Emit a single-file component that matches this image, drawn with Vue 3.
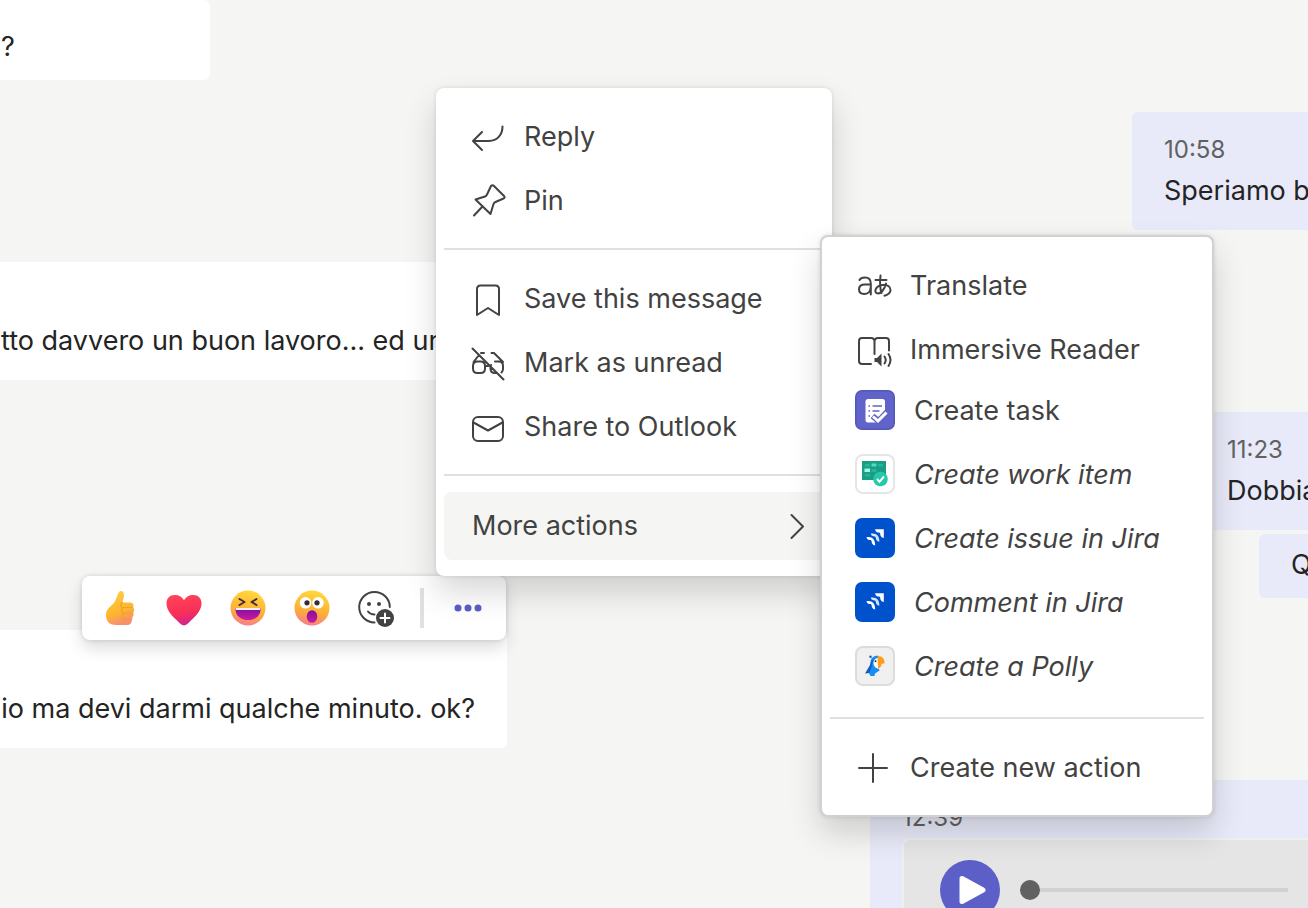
<script setup>
const jira = 'jira'
const quickActions = [
  { icon: 'reply', label: 'Reply' },
  { icon: 'pin', label: 'Pin' },
]
const messageActions = [
  { icon: 'save', label: 'Save this message' },
  { icon: 'unread', label: 'Mark as unread' },
  { icon: 'mail', label: 'Share to Outlook' },
]
const readingActions = [
  { icon: 'translate', label: 'Translate' },
  { icon: 'reader', label: 'Immersive Reader' },
]
const appActions = [
  { icon: 'task', label: 'Create task', plain: true },
  { icon: 'board', label: 'Create work item' },
  { icon: jira, label: 'Create issue in Jira' },
  { icon: jira, label: 'Comment in Jira' },
  { icon: 'polly', label: 'Create a Polly' },
]
</script>

<template>
  <main class="chat">
    <section class="column received">
      <article class="bubble first"><p>?</p></article>
      <article class="bubble second"><p>tto davvero un buon lavoro... ed un</p></article>
      <article class="bubble third">
        <p>io ma devi darmi qualche minuto. ok?</p>
        <div class="reactions" role="toolbar" aria-label="Reactions">
          <button type="button" aria-label="Like">
            <svg viewBox="0 0 36 36" width="36" height="36">
              <defs>
                <linearGradient id="thumb" x1="0" y1="0" x2="0.3" y2="1">
                  <stop offset="0" stop-color="#ffd04a" /><stop offset="0.7" stop-color="#fdb52c" /><stop offset="1" stop-color="#f98f72" />
                </linearGradient>
              </defs>
              <path d="M17 2c2-2 5-.5 5 2.500 0 3-1 5.500-1.500 8h7.500c3 0 4.500 3 3 5 1.500 1.500 1.500 4 0 5 1 2 .5 4-1 5 .5 3-.5 7-4 7.500H14C7 35 4 31 4 25c0-6 4-8 7-11 3-3 4-9 6-12z" fill="url(#thumb)" />
              <path d="M20.500 12.500c-3 2-2 5 1 5h9M21 18c-2.500 1-2 5 1 5h9M22 23.500c-2.500 1-2 5 1 5h7M23 29c-2 1-2 4 0 5" fill="none" stroke="#f0a02a" stroke-width="1.200" stroke-linecap="round" />
            </svg>
          </button>
          <button type="button" aria-label="Heart">
            <svg viewBox="0 0 36 36" width="36" height="36">
              <defs>
                <linearGradient id="heart" x1="0.3" y1="0" x2="0.55" y2="1">
                  <stop offset="0" stop-color="#ff4458" /><stop offset="0.6" stop-color="#f92f56" /><stop offset="1" stop-color="#cc2496" />
                </linearGradient>
              </defs>
              <path d="M18 35.500c-2 0-5-3-8-6C4 24 .5 19 .5 13.500.5 8 4 5 8.500 5c4.500 0 8 2 9.500 5.500C19.500 7 23 5 27.500 5 32 5 35.500 8 35.500 13.500c0 5.500-4 11-9.500 16-3 3-6 6-8 6z" fill="url(#heart)" />
            </svg>
          </button>
          <button type="button" aria-label="Laugh">
            <svg viewBox="0 0 36 36" width="36" height="36">
              <defs>
                <linearGradient id="face" x1="0.6" y1="0" x2="0.4" y2="1">
                  <stop offset="0" stop-color="#ffd83c" /><stop offset="0.6" stop-color="#fdaf35" /><stop offset="1" stop-color="#f77f8c" />
                </linearGradient>
                <linearGradient id="mouth" x1="0" y1="0" x2="0" y2="1">
                  <stop offset="0" stop-color="#7d10a5" /><stop offset="1" stop-color="#cc1a9a" />
                </linearGradient>
              </defs>
              <circle cx="18" cy="18" r="17.500" fill="url(#face)" />
              <path d="M9.500 9l5 3-5 3M26.500 9l-5 3 5 3" fill="none" stroke="#4b2b35" stroke-width="2" stroke-linecap="round" stroke-linejoin="round" />
              <path d="M5.500 18h25c.5 7-5 12-12.500 12S5 25 5.500 18z" fill="url(#mouth)" />
              <path d="M5.500 18h25l-.5 2H6z" fill="#f5edf8" />
            </svg>
          </button>
          <button type="button" aria-label="Surprised">
            <svg viewBox="0 0 36 36" width="36" height="36">
              <circle cx="18" cy="18" r="17.500" fill="url(#face)" />
              <circle cx="11.500" cy="12.800" r="5.800" fill="#fff" /><circle cx="24" cy="12.800" r="5.800" fill="#fff" />
              <circle cx="13" cy="12.800" r="2.600" fill="#382a34" /><circle cx="23" cy="12.800" r="2.600" fill="#382a34" />
              <ellipse cx="18" cy="26.500" rx="5.300" ry="6.300" fill="url(#mouth)" />
            </svg>
          </button>
          <button type="button" aria-label="Add reaction">
            <svg viewBox="0 0 36 36" width="36" height="36" class="line">
              <path d="M31.800 17A15.300 15.300 0 1 0 16.500 32.500M10 21.500c1.500 2 3.500 3 6.500 3" />
              <circle cx="11" cy="14" r="2" class="solid" /><circle cx="21" cy="14" r="2" class="solid" />
              <circle cx="27" cy="28" r="9" class="solid" />
              <path d="M27 23.500v9M22.500 28h9" class="knockout" />
            </svg>
          </button>
          <span class="bar"></span>
          <button type="button" aria-label="More options">
            <svg viewBox="0 0 36 36" width="36" height="36" fill="#5b5fc7">
              <circle cx="8" cy="18" r="3.500" /><circle cx="18" cy="18" r="3.500" /><circle cx="28" cy="18" r="3.500" />
            </svg>
          </button>
        </div>
      </article>
    </section>

    <section class="column sent">
      <article class="bubble one"><time>10:58</time><p>Speriamo b</p></article>
      <article class="bubble two"><time>11:23</time><p>Dobbia</p></article>
      <article class="bubble three"><p>Q</p></article>
      <article class="bubble four">
        <time>12:39</time>
        <div class="player">
          <button type="button" class="play" aria-label="Play">
            <svg viewBox="0 0 60 60" width="60" height="60">
              <path d="M22 18.500v23l21-11.500z" fill="#fff" stroke="#fff" stroke-width="5" stroke-linejoin="round" />
            </svg>
          </button>
          <input type="range" min="0" max="100" value="0" aria-label="Position" />
        </div>
      </article>
    </section>

    <nav class="menu primary" aria-label="Message actions">
      <button v-for="a in quickActions" :key="a.label" type="button" class="item">
        <svg v-if="a.icon === 'reply'" class="line" viewBox="0 0 32 32" width="32" height="32">
          <path d="M10 12L1 21l9 9M1 21h16c8 0 13.500-6 13.500-14.500" />
        </svg>
        <svg v-else class="line" viewBox="0 0 32 32" width="32" height="32">
          <path d="M19 2q1.500-1.500 3 0l10 10q1.500 1.500-.5 2.500l-8 3.500q-1.500.5-2 2l-3 10L3.500 15.500l9.500-3q1.500-.5 2-2zM10.500 22.500L2 31.500" />
        </svg>
        <span>{{ a.label }}</span>
      </button>
      <hr />
      <button v-for="a in messageActions" :key="a.label" type="button" class="item">
        <svg v-if="a.icon === 'save'" class="line" viewBox="0 0 32 32" width="32" height="32">
          <path d="M5 33V7q0-3.500 3.500-3.500h15q3.500 0 3.500 3.500v26l-11-7z" />
        </svg>
        <svg v-else-if="a.icon === 'unread'" class="line" viewBox="0 0 32 32" width="32" height="32">
          <path d="M.5 2.500l31 31M9 7h3M7 9L1.500 16M19.500 7h2.500L31 16M5.500 15.500h3q4.500 0 4.500 4.500v2.500q0 4.500-4.500 4.500h-3Q1 27 1 22.500V20q0-4.500 4.500-4.500M13 20h3.500M23 15.500h4q4 0 4 4.500v3q0 2-1.500 3.500M19 19q-.5 1-.5 2v1.500q0 4.500 4.500 4.500h2" />
        </svg>
        <svg v-else class="line" viewBox="0 0 32 32" width="32" height="32">
          <rect x="1" y="7" width="30" height="24" rx="5" /><path d="M1.500 12.500L16 20.500l14.500-8" />
        </svg>
        <span>{{ a.label }}</span>
      </button>
      <hr />
      <button type="button" class="item more" aria-haspopup="true" aria-expanded="true">
        <span>More actions</span>
        <svg class="line chevron" viewBox="0 0 14 26" width="14" height="26"><path d="M1.500 3L13 14.500 1.500 26" /></svg>
      </button>
    </nav>

    <nav class="menu secondary" aria-label="More actions">
      <button v-for="a in readingActions" :key="a.label" type="button" class="item">
        <svg v-if="a.icon === 'translate'" class="line" viewBox="0 0 36 36" width="36" height="36">
          <path d="M3.500 13c1-2 3-2.500 5.500-2.500 4 0 5.800 2 5.800 6V27.500M14.500 17.500H9c-4 0-6 1.500-6 4.800 0 3 2 4.700 5 4.700 4 0 6.500-2.500 6.500-6" />
          <path d="M19.500 13h11M24.500 8.500c-.8 7-.5 13 1 17.500M30 16.500C28.500 22.500 25 26.500 22 26.500c-4.500 0-3.500-7.500 4.500-8.500 5-.5 8 1.500 8 5 0 3-2.500 4.800-6 5.800" />
        </svg>
        <svg v-else class="line" viewBox="0 0 36 36" width="36" height="36">
          <path d="M15 33H6q-3 0-3-3V10q0-3 3-3h9q3.500 0 3.500 3.500V23M18.500 10.500Q18.500 7 22 7h8q3 0 3 3v9.500" />
          <path d="M18.500 27h2.500l4.500-4.500v13L21 31h-2.500z" class="solid" />
          <path d="M28.500 25.500q2.500 3.500 0 7M32.500 23q4 6 0 12" />
        </svg>
        <span>{{ a.label }}</span>
      </button>
      <div class="apps">
        <button v-for="a in appActions" :key="a.label" type="button" class="item app" :class="{ plain: a.plain }">
          <svg v-if="a.icon === 'task'" viewBox="0 0 40 40" width="40" height="40">
            <rect width="40" height="40" rx="7" fill="#5358b5" /><rect x="1.500" y="1.500" width="37" height="37" rx="5" fill="#5f63ca" />
            <path d="M13 9h14.500a2.500 2.500 0 0 1 2.500 2.500V24l-8 8.500h-9a2.500 2.500 0 0 1-2.500-2.500V11.500A2.500 2.500 0 0 1 13 9z" fill="#fff" />
            <path d="M13.500 16h1.500M17.500 16H27M13.500 21h1.500M17.500 21h7M13.500 26h1.500" fill="none" stroke="#6065c9" stroke-width="1.500" />
            <path d="M17.500 26l6 5L33 21" fill="none" stroke="#5f63ca" stroke-width="6" />
            <path d="M18 26.500l5 4.500L31.500 22.500" fill="none" stroke="#fff" stroke-width="3" />
          </svg>
          <svg v-else-if="a.icon === 'board'" viewBox="0 0 40 40" width="40" height="40">
            <rect x="1" y="1" width="38" height="38" rx="7" fill="#fff" stroke="#e6e6e6" stroke-width="2" />
            <path d="M7 7h24v19H7z" fill="#1b9c85" />
            <path d="M10 10h5v2.500h-5zM23 10h5v2.500h-5zM16.500 15h5v3h-5zM10 20h5v2.500h-5z" fill="#20b898" />
            <path d="M16.500 9.500h5v3h-5z" fill="#55dcc0" /><path d="M9.500 14.500H15v3.500H9.500z" fill="#a4f5e2" />
            <circle cx="25.500" cy="25" r="7.300" fill="#25c9a9" /><path d="M22 25l2.500 2.800L29 22.500" fill="none" stroke="#fff" stroke-width="2" />
          </svg>
          <svg v-else-if="a.icon === 'jira'" viewBox="0 0 40 40" width="40" height="40">
            <rect width="40" height="40" rx="7" fill="#0052cc" />
            <path d="M20 11.200h8.800V20c-2.600-.6-3.600-2-3.600-4.600l-.8-.8C21.800 14.600 20.400 13.600 20 11.200z" fill="#fff" />
            <path d="M15.800 15.400c3 0 8.600-.5 8.600 8.400-2.600-.6-3.600-2-3.600-4.600l-.8-.8c-2.600 0-3.800-.8-4.200-3z" fill="#d6e4fa" />
            <path d="M11.500 19c3 0 8.700-.5 8.700 8.500-2.600-.6-3.600-2-3.600-4.600l-.8-.8c-2.600 0-3.900-.8-4.300-3.100z" fill="#fff" />
          </svg>
          <svg v-else viewBox="0 0 40 40" width="40" height="40">
            <rect x="1" y="1" width="38" height="38" rx="7" fill="#f0f0f0" stroke="#dcdcdc" stroke-width="2" />
            <path d="M24 10c-5-.8-8.500 2-8.500 7L14 27l1.500 3h4l.5-2.500 4.500-3-3-9z" fill="#148df5" />
            <path d="M15.500 10.500l1.500 3-2 5.500-5 8.500 4.500-.5 2-6 1.500-6.500z" fill="#185bbd" />
            <circle cx="15.500" cy="10.800" r="1.200" fill="#185bbd" />
            <path d="M24 12c-3.500 0-5.500 2-5.500 5 0 3.500 2.500 5.500 5.500 6z" fill="#fff" /><circle cx="20.500" cy="15.300" r="1" fill="#263238" />
            <path d="M22.500 10.500c4-1.500 7.500 2 7 7l-3 .3q.5 3-3.500 5.200z" fill="#ff9d18" />
          </svg>
          <span>{{ a.label }}</span>
        </button>
      </div>
      <hr />
      <button type="button" class="item">
        <svg class="line" viewBox="0 0 36 36" width="36" height="36"><path d="M17 5v28M3 19h28" /></svg>
        <span>Create new action</span>
      </button>
    </nav>
  </main>
</template>

<style>
body { margin: 0; }
</style>

<style scoped>
.chat {
  position: relative;
  display: flex;
  justify-content: space-between;
  height: 100vh;
  overflow: hidden;
  background: #f5f5f4;
  color: #242424;
  font-family: Inter, "Noto Sans", sans-serif;
  font-size: 27px;
}
button {
  border: 0;
  padding: 0;
  background: none;
  color: inherit;
  font: inherit;
}
p { margin: 0; line-height: 42px; white-space: nowrap; }
svg { flex: none; display: block; overflow: visible; }
.line { fill: none; stroke: #424242; stroke-width: 2; stroke-linecap: round; stroke-linejoin: round; }
.line .solid { fill: #424242; stroke: none; }
.line .knockout { stroke: #fff; }

.column { display: flex; flex-direction: column; }
.received { align-items: flex-start; }
.sent { align-items: flex-end; }
.bubble { box-sizing: border-box; flex: none; padding: 22px 32px 18px; }
.received .bubble { padding-left: 1px; padding-top: 58px; background: #fff; border-radius: 0 6px 6px 0; }
.sent .bubble { padding-right: 0; background: #e8eaf9; border-radius: 6px 0 0 6px; }
.received .first { width: 210px; height: 80px; padding-top: 26px; }
.received .second { margin-top: 182px; width: 560px; }
.received .third { position: relative; margin-top: 250px; width: 507px; display: flex; justify-content: flex-end; }
.sent .one { margin-top: 112px; width: 176px; }
.sent .two { margin-top: 182px; width: 113px; }
.sent .three { margin-top: 4px; width: 49px; padding-top: 10px; padding-bottom: 12px; }
.sent .four { margin-top: 182px; width: 438px; }
time { display: block; margin-bottom: 4px; color: #616161; font-size: 24px; line-height: 32px; }

.player {
  display: flex;
  align-items: center;
  gap: 20px;
  padding: 20px 20px 20px 36px;
  border: 2px solid #efefef;
  border-right: 0;
  border-radius: 8px 0 0 8px;
  background: #e5e5e5;
}
.play { width: 60px; height: 60px; border-radius: 50%; background: #5b5fc7; }
input[type="range"] { flex: 1; min-width: 0; height: 20px; margin: 0; appearance: none; background: none; }
input[type="range"]::-webkit-slider-runnable-track { height: 4px; background: #d1d1d1; }
input[type="range"]::-webkit-slider-thumb { appearance: none; width: 20px; height: 20px; margin-top: -8px; border-radius: 50%; background: #616161; }

.reactions {
  position: absolute;
  top: -54px;
  right: 1px;
  display: flex;
  align-items: center;
  height: 64px;
  padding: 0 6px;
  border-radius: 8px;
  background: #fff;
  box-shadow: 0 0 4px rgba(0, 0, 0, 0.14), 0 8px 16px rgba(0, 0, 0, 0.14);
}
.reactions button { display: grid; place-items: center; width: 64px; height: 64px; }
.bar { width: 4px; height: 40px; margin: 0 12px; background: #e0e0e0; }

.menu {
  position: absolute;
  box-sizing: border-box;
  padding: 16px 8px;
  background: #fff;
  color: #424242;
  box-shadow: 0 0 4px rgba(0, 0, 0, 0.12), 0 16px 32px rgba(0, 0, 0, 0.16);
}
.primary { top: 88px; left: 436px; width: 396px; border-radius: 8px; }
.secondary { top: 235px; left: 820px; width: 394px; border: 2px solid #d1d1d1; border-radius: 8px; }
.item {
  display: flex;
  align-items: center;
  gap: 20px;
  width: 100%;
  height: 64px;
  padding: 0 20px 0 28px;
  border-radius: 8px;
  text-align: left;
  white-space: nowrap;
}
.secondary .item { padding-left: 26px; gap: 18px; }
.apps { margin: -3px 0 19px; }
.apps .app { padding-left: 25px; gap: 19px; font-style: italic; }
.apps .plain { font-style: normal; }
.more { height: 68px; padding-bottom: 2px; justify-content: space-between; background: #f5f5f4; }
hr { margin: 16px 0; border: 0; height: 2px; background: #e0e0e0; }
</style>
